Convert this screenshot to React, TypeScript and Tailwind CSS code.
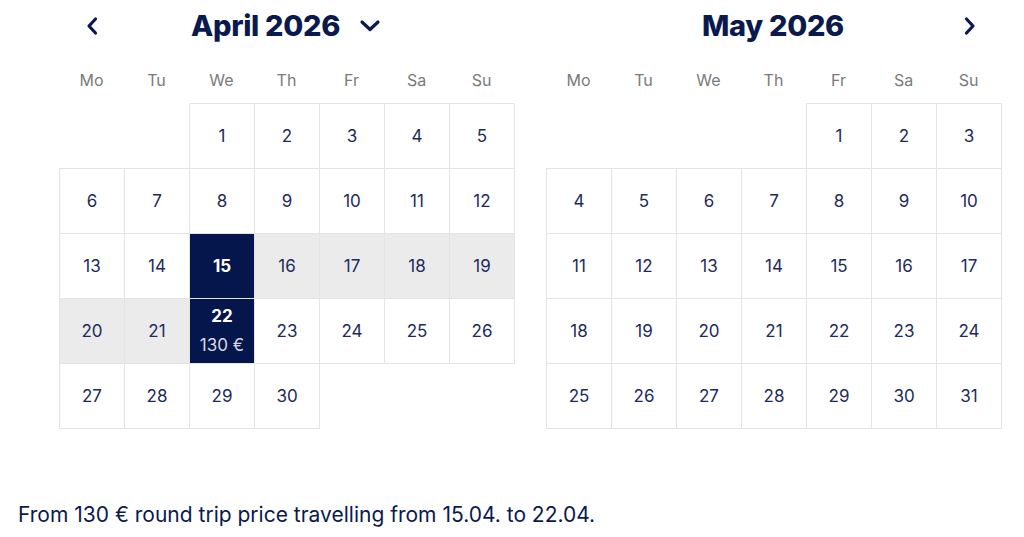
import React from "react";

type Cell = { d: number; state?: "sel" | "range"; price?: string } | null;

const NAVY = "text-[#0a1a4e]";
const DAY = "text-[#1c2b5c]";

function buildMonth(offset: number, days: number, mark: (d: number) => { state?: "sel" | "range"; price?: string }): Cell[] {
  const cells: Cell[] = [];
  for (let i = 0; i < offset; i++) cells.push(null);
  for (let d = 1; d <= days; d++) cells.push({ d, ...mark(d) });
  return cells;
}

const april = buildMonth(2, 30, (d) => {
  if (d === 15) return { state: "sel" };
  if (d === 22) return { state: "sel", price: "130 €" };
  if (d > 15 && d < 22) return { state: "range" };
  return {};
});
const may = buildMonth(4, 31, () => ({}));

const WEEK = ["Mo", "Tu", "We", "Th", "Fr", "Sa", "Su"];

function ChevronLeft() {
  return (
    <svg width="14" height="20" viewBox="0 0 14 20" fill="none">
      <path d="M10.5 3 L4 10 L10.5 17" stroke="#0a1a4e" strokeWidth="3.2" strokeLinecap="round" strokeLinejoin="round" />
    </svg>
  );
}
function ChevronRight() {
  return (
    <svg width="14" height="20" viewBox="0 0 14 20" fill="none">
      <path d="M3.5 3 L10 10 L3.5 17" stroke="#0a1a4e" strokeWidth="3.2" strokeLinecap="round" strokeLinejoin="round" />
    </svg>
  );
}
function ChevronDown() {
  return (
    <svg width="22" height="14" viewBox="0 0 22 14" fill="none">
      <path d="M3 3 L11 10.5 L19 3" stroke="#0a1a4e" strokeWidth="3.2" strokeLinecap="round" strokeLinejoin="round" />
    </svg>
  );
}

function DayCell({ c }: { c: Cell }) {
  if (!c) return <div className="h-[65px]" />;
  const base = "w-[66px] h-[66px] border border-[#e4e4e4] flex flex-col items-center justify-center";
  if (c.state === "sel") {
    return (
      <div className={`${base} bg-[#05164d] text-white`}>
        <span className="text-[17px] font-bold leading-[29px]">{c.d}</span>
        {c.price && <span className="text-[17px] leading-[29px] text-[#d6d9e3]">{c.price}</span>}
      </div>
    );
  }
  if (c.state === "range") {
    return (
      <div className={`${base} bg-[#ebebeb] ${DAY}`}>
        <span className="text-[17px] leading-[24px]">{c.d}</span>
      </div>
    );
  }
  return (
    <div className={`${base} bg-white ${DAY}`}>
      <span className="text-[17px] leading-[24px]">{c.d}</span>
    </div>
  );
}

function Month({ title, cells, left, right }: { title: string; cells: Cell[]; left?: boolean; right?: boolean }) {
  return (
    <div className="w-[456px] flex flex-col">
      <div className="h-[52px] grid grid-cols-[65px_1fr_65px] items-center">
        <div className="flex justify-center">{left && <ChevronLeft />}</div>
        <div className="flex items-center justify-center gap-[19px] pr-[2px]">
          <span className={`text-[29px] font-extrabold tracking-[-0.3px] ${NAVY}`}>{title}</span>
          {left && <ChevronDown />}
        </div>
        <div className="flex justify-center">{right && <ChevronRight />}</div>
      </div>
      <div className="h-[51px] pt-[16px] grid grid-cols-[repeat(7,65px)]">
        {WEEK.map((w) => (
          <div key={w} className="text-center text-[16px] leading-[24px] text-[#7a7a7a]">
            {w}
          </div>
        ))}
      </div>
      <div className="grid grid-cols-[repeat(7,65px)] auto-rows-[65px]">
        {cells.map((c, i) => (
          <DayCell key={i} c={c} />
        ))}
      </div>
    </div>
  );
}

export default function App() {
  return (
    <div className="w-[1024px] h-[537px] bg-white overflow-hidden" style={{ fontFamily: "Inter, 'Noto Sans', sans-serif" }}>
      <div className="flex gap-[31px] pl-[59px]">
        <Month title="April 2026" cells={april} left />
        <Month title="May 2026" cells={may} right />
      </div>
      <div className={`mt-[73px] pl-[18px] text-[21px] leading-[28px] ${NAVY}`}>
        From 130 € round trip price travelling from 15.04. to 22.04.
      </div>
    </div>
  );
}
